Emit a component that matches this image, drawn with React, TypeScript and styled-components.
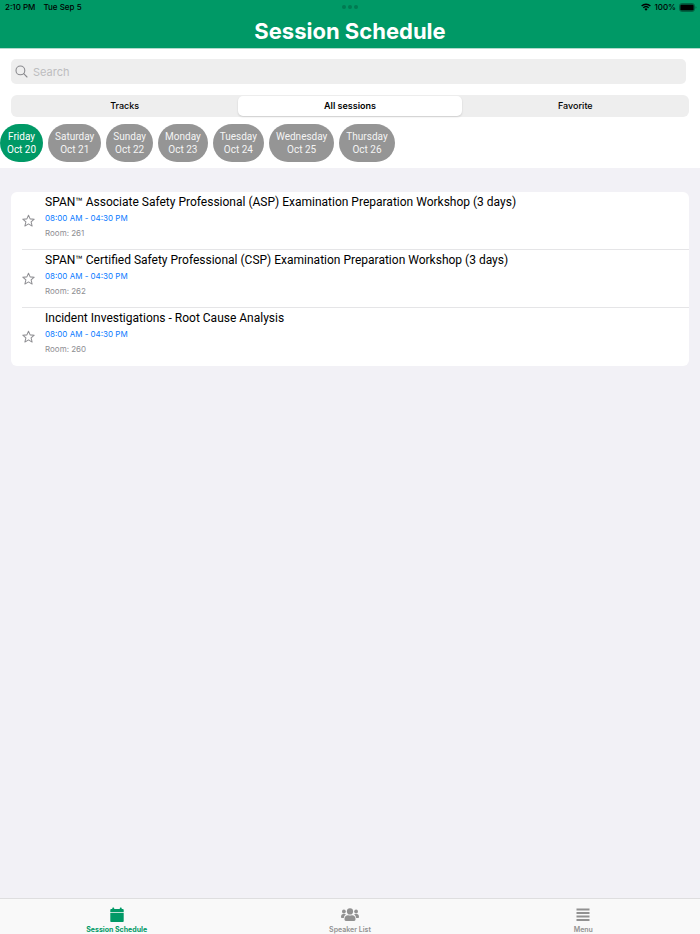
import React, { useState } from "react";
import styled, { createGlobalStyle } from "styled-components";

const GlobalStyle = createGlobalStyle`
  *, *::before, *::after { box-sizing: border-box; }
  body {
    margin: 0;
    background: #f2f1f6;
    font-family: Inter, "Liberation Sans", sans-serif;
    color: #000;
  }
  button, input { font: inherit; color: inherit; }
  button { border: 0; padding: 0; background: none; cursor: pointer; }
`;

const Screen = styled.div`
  min-height: 100vh;
  display: flex;
  flex-direction: column;
`;

const Header = styled.header`
  background: #009966;
  border-bottom: 1px solid #b3d9cc;
`;

const StatusBar = styled.div`
  display: grid;
  grid-template-columns: 1fr auto 1fr;
  align-items: center;
  height: 14px;
  padding: 0 5px;
  font-size: 8px;
  font-weight: 500;
  line-height: 14px;
`;

const StatusGroup = styled.div<{ $end?: boolean }>`
  display: flex;
  align-items: center;
  justify-content: ${(p) => (p.$end ? "flex-end" : "flex-start")};
  gap: ${(p) => (p.$end ? "3px" : "8px")};
  margin-right: ${(p) => (p.$end ? "-2px" : "0")};
`;

const Dots = styled.div`
  display: flex;
  gap: 2px;
`;

const Dot = styled.span`
  width: 4px;
  height: 4px;
  border-radius: 50%;
  background: #007a52;
`;

const Title = styled.h1`
  margin: 0;
  padding: 3px 0 2px;
  font-size: 22px;
  line-height: 29px;
  font-weight: 700;
  text-align: center;
  color: #fff;
`;

const Filters = styled.section`
  background: #fff;
  padding: 10px 0 6px;
`;

const SearchField = styled.label`
  display: flex;
  align-items: center;
  gap: 5px;
  height: 25px;
  margin: 0 14px 0 11px;
  padding: 0 4px;
  border-radius: 5px;
  background: #eee;
  color: #8a8a8e;
`;

const SearchInput = styled.input`
  flex: 1;
  min-width: 0;
  padding: 0;
  border: 0;
  outline: 0;
  background: none;
  font-size: 11px;
  line-height: 16px;
  color: #000;
  &::placeholder { color: #bdbdbf; opacity: 1; }
`;

const Segments = styled.div`
  display: grid;
  grid-template-columns: repeat(3, 1fr);
  height: 22px;
  margin: 11px 11px 7px;
  padding: 1px;
  border-radius: 6px;
  background: #eee;
`;

const Segment = styled.button<{ $active: boolean }>`
  margin: 0 1px;
  padding-bottom: 1px;
  border-radius: 5px;
  font-size: 9px;
  line-height: 19px;
  font-weight: ${(p) => (p.$active ? 600 : 500)};
  background: ${(p) => (p.$active ? "#fff" : "transparent")};
  box-shadow: ${(p) => (p.$active ? "0 1px 2px rgba(0, 0, 0, 0.14)" : "none")};
`;

const Days = styled.div`
  display: flex;
  gap: 5px;
  overflow-x: auto;
  scrollbar-width: none;
`;

const Day = styled.button<{ $active: boolean }>`
  flex: none;
  display: flex;
  flex-direction: column;
  align-items: center;
  justify-content: center;
  height: 38px;
  padding: 0 7px;
  border-radius: 19px;
  font-family: Roboto, Inter, sans-serif;
  font-size: 10px;
  line-height: 13px;
  color: ${(p) => (p.$active ? "#fff" : "#f4f4f4")};
  background: ${(p) => (p.$active ? "#009966" : "#959595")};
`;

const Content = styled.main`
  flex: 1;
  padding: 24px 11px;
`;

const SessionList = styled.ul`
  margin: 0;
  padding: 0;
  list-style: none;
  border-radius: 6px;
  background: #fff;
`;

const SessionItem = styled.li`
  display: flex;
  align-items: center;
  gap: 10px;
  height: 58px;
  margin-left: 11px;
  border-bottom: 1px solid #e5e5e7;
  &:last-child { border-bottom-color: transparent; }
`;

const StarButton = styled.button`
  display: flex;
  width: 13px;
  height: 13px;
  color: #8f8f93;
`;

const SessionText = styled.div`
  align-self: flex-start;
  padding-top: 2px;
  min-width: 0;
`;

const SessionTitle = styled.h2`
  margin: 0;
  font-family: Roboto, Inter, sans-serif;
  font-size: 12px;
  line-height: 16px;
  font-weight: 400;
`;

const SessionMeta = styled.p<{ $time?: boolean }>`
  margin: 0;
  padding-top: 1px;
  font-size: 8px;
  line-height: 14px;
  color: ${(p) => (p.$time ? "#0a7aff" : "#8e8e93")};
`;

const TabBar = styled.nav`
  position: sticky;
  bottom: 0;
  display: grid;
  grid-template-columns: repeat(3, 1fr);
  height: 36px;
  border-top: 1px solid #dededf;
  background: #f9f9f9;
`;

const TabLink = styled.a<{ $active?: boolean }>`
  display: flex;
  flex-direction: column;
  align-items: center;
  gap: 2px;
  padding-top: 8px;
  font-size: 7px;
  line-height: 9px;
  font-weight: ${(p) => (p.$active ? 700 : 600)};
  text-decoration: none;
  color: ${(p) => (p.$active ? "#009966" : "#919191")};
`;

const WifiIcon = () => (
  <svg width="10" height="8" viewBox="0 0 20 15" aria-hidden="true" fill="none" stroke="#000" strokeWidth="2.6">
    <path d="M1.2 5.6a12.6 12.6 0 0 1 17.6 0" />
    <path d="M4.6 9a7.8 7.8 0 0 1 10.8 0" />
    <path d="M6.9 11.5a4.5 4.5 0 0 1 6.2 0L10 14.8z" fill="#000" stroke="none" />
  </svg>
);

const BatteryIcon = () => (
  <svg width="18" height="9" viewBox="0 0 18 9" aria-hidden="true">
    <rect x="0.5" y="0.5" width="15" height="8" rx="2.4" fill="none" stroke="#00573a" strokeWidth="0.8" />
    <rect x="1.3" y="1.4" width="13.4" height="6.2" rx="1.4" />
    <path d="M16.6 3.2c1.1.4 1.1 2.2 0 2.6z" fill="#00573a" />
  </svg>
);

const SearchIcon = () => (
  <svg width="13" height="13" viewBox="0 0 13 13" aria-hidden="true" fill="none" stroke="currentColor" strokeWidth="1.1" strokeLinecap="round">
    <circle cx="5.4" cy="5.4" r="4.4" />
    <path d="M8.7 8.7l3.3 3.3" />
  </svg>
);

const StarIcon = () => (
  <svg width="13" height="13" viewBox="0 0 24 24" aria-hidden="true" fill="none" stroke="currentColor" strokeWidth="1.9" strokeLinejoin="round">
    <path d="M12 2.200l3 6.800 7.600.6-5.800 5 1.900 7.700L12 18.300l-6.700 4 1.900-7.700-5.800-5L9 9z" />
  </svg>
);

const CalendarIcon = () => (
  <svg width="14" height="16" viewBox="0 0 14 16" aria-hidden="true" fill="currentColor">
    <path d="M2.300 1.200a.7.7 0 0 1 .7-.7h.5a.7.7 0 0 1 .7.7V2h5.600v-.8a.7.7 0 0 1 .7-.7h.5a.7.7 0 0 1 .7.7V2h.9c.7 0 1.100.5 1.100 1.100v2.200H.3V3.100C.3 2.500.7 2 1.400 2h.9z" />
    <path d="M.3 5.900h13.400v8c0 .7-.5 1.100-1.100 1.100H1.400c-.7 0-1.100-.5-1.100-1.100z" />
  </svg>
);

const PeopleIcon = () => (
  <svg width="18" height="16" viewBox="0 0 18 16" aria-hidden="true" fill="currentColor">
    <circle cx="9" cy="4.400" r="3.100" />
    <circle cx="2.900" cy="4.500" r="1.900" />
    <circle cx="15.100" cy="4.500" r="1.900" />
    <path d="M3.500 12.600v-.9c0-2 1.500-3.500 3.500-3.500h.3c1 .5 2.400.5 3.400 0h.3c2 0 3.500 1.500 3.500 3.500v.9c0 .8-.6 1.300-1.300 1.300H4.800c-.7 0-1.300-.5-1.300-1.300z" />
    <path d="M0 9.900c0-1.600.9-2.800 2.100-2.800h1.700c.5 0 .9.200 1.200.5-1.200.7-1.900 1.800-2.200 3.300H.9c-.5 0-.9-.5-.9-1zM18 9.900c0-1.600-.9-2.800-2.100-2.800h-1.700c-.5 0-.9.200-1.200.5 1.200.7 1.900 1.800 2.200 3.300h1.900c.5 0 .9-.5.9-1z" />
  </svg>
);

const MenuIcon = () => (
  <svg width="14" height="16" viewBox="0 0 14 16" aria-hidden="true" fill="currentColor">
    <path d="M.5 1.500h13v2H.5zM.5 5h13v2H.5zM.5 8.500h13v2H.5zM.5 12h13v2H.5z" />
  </svg>
);

const segments = ["Tracks", "All sessions", "Favorite"];

const days = [
  ["Friday", "Oct 20"],
  ["Saturday", "Oct 21"],
  ["Sunday", "Oct 22"],
  ["Monday", "Oct 23"],
  ["Tuesday", "Oct 24"],
  ["Wednesday", "Oct 25"],
  ["Thursday", "Oct 26"],
];

const sessions = [
  { title: "SPAN™ Associate Safety Professional (ASP) Examination Preparation Workshop (3 days)", room: "261" },
  { title: "SPAN™ Certified Safety Professional (CSP) Examination Preparation Workshop (3 days)", room: "262" },
  { title: "Incident Investigations - Root Cause Analysis", room: "260" },
];

export default function App() {
  const [segment, setSegment] = useState("All sessions");
  const [day, setDay] = useState("Friday");

  return (
    <Screen>
      <GlobalStyle />
      <Header>
        <StatusBar>
          <StatusGroup>
            <span>2:10 PM</span>
            <span>Tue Sep 5</span>
          </StatusGroup>
          <Dots>
            <Dot />
            <Dot />
            <Dot />
          </Dots>
          <StatusGroup $end>
            <WifiIcon />
            <span>100%</span>
            <BatteryIcon />
          </StatusGroup>
        </StatusBar>
        <Title>Session Schedule</Title>
      </Header>
      <Filters>
        <SearchField>
          <SearchIcon />
          <SearchInput type="search" placeholder="Search" aria-label="Search" />
        </SearchField>
        <Segments>
          {segments.map((name) => (
            <Segment key={name} type="button" $active={name === segment} aria-pressed={name === segment} onClick={() => setSegment(name)}>
              {name}
            </Segment>
          ))}
        </Segments>
        <Days>
          {days.map(([name, date]) => (
            <Day key={name} type="button" $active={name === day} aria-pressed={name === day} onClick={() => setDay(name)}>
              <span>{name}</span>
              <span>{date}</span>
            </Day>
          ))}
        </Days>
      </Filters>
      <Content>
        <SessionList>
          {sessions.map((s) => (
            <SessionItem key={s.room}>
              <StarButton type="button" aria-label={`Add ${s.title} to favorites`}>
                <StarIcon />
              </StarButton>
              <SessionText>
                <SessionTitle>{s.title}</SessionTitle>
                <SessionMeta $time>08:00 AM - 04:30 PM</SessionMeta>
                <SessionMeta>Room: {s.room}</SessionMeta>
              </SessionText>
            </SessionItem>
          ))}
        </SessionList>
      </Content>
      <TabBar>
        <TabLink href="#schedule" $active aria-current="page">
          <CalendarIcon />
          Session Schedule
        </TabLink>
        <TabLink href="#speakers">
          <PeopleIcon />
          Speaker List
        </TabLink>
        <TabLink href="#menu">
          <MenuIcon />
          Menu
        </TabLink>
      </TabBar>
    </Screen>
  );
}
